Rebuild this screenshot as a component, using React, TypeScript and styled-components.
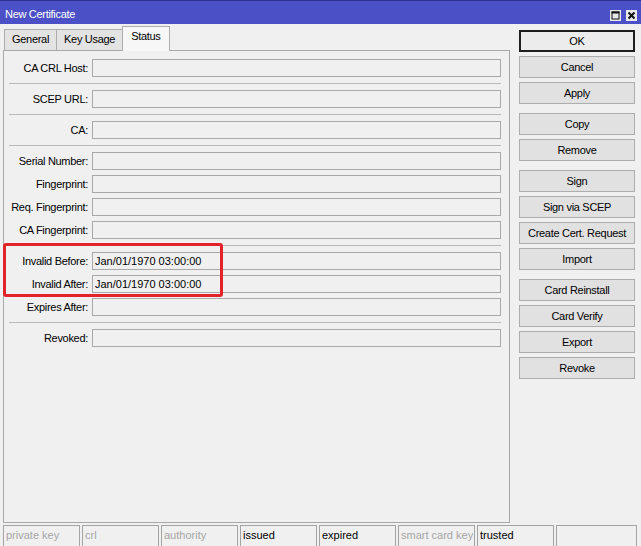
import React from "react";
import styled, { createGlobalStyle } from "styled-components";

const GlobalStyle = createGlobalStyle`
  html, body {
    margin: 0;
    padding: 0;
    background: #f0f0f0;
  }
  body {
    font-family: "Liberation Sans", Arial, sans-serif;
    font-size: 11px;
    color: #000;
  }
`;

const Window = styled.div`
  position: relative;
  width: 641px;
  height: 546px;
  display: flex;
  flex-direction: column;
  background: #f0f0f0;
  overflow: hidden;
`;

const TitleBar = styled.div`
  flex: none;
  height: 24px;
  box-sizing: border-box;
  background: #4b50c6;
  border-top: 1px solid #2d3090;
  display: flex;
  align-items: center;
  padding: 2px 4px 0 5px;
  color: #fff;
  font-size: 11px;
  letter-spacing: -0.3px;
`;

const Title = styled.div`
  flex: 1;
`;

const TitleButtons = styled.div`
  display: flex;
  gap: 5px;
  margin-top: 3px;
  svg {
    display: block;
  }
`;

const Main = styled.div`
  flex: none;
  height: 499px;
  display: flex;
  gap: 9px;
  padding-left: 3px;
`;

const LeftCol = styled.div`
  width: 507px;
  display: flex;
  flex-direction: column;
`;

const Tabs = styled.div`
  flex: none;
  height: 26px;
  display: flex;
  align-items: flex-end;
  padding-left: 2px;
`;

const Tab = styled.div<{ $active?: boolean }>`
  position: relative;
  box-sizing: border-box;
  height: ${(p) => (p.$active ? "25px" : "21px")};
  margin-bottom: ${(p) => (p.$active ? "-1px" : "0")};
  padding: ${(p) => (p.$active ? "3px 8px 0" : "3px 7px 0")};
  border: 1px solid #adadad;
  border-bottom: ${(p) => (p.$active ? "none" : "0")};
  margin-left: -1px;
  background: ${(p) => (p.$active ? "#f7f7f7" : "#e3e3e3")};
  letter-spacing: -0.3px;
  z-index: ${(p) => (p.$active ? 1 : 0)};
`;

const Panel = styled.div`
  flex: 1;
  box-sizing: border-box;
  border: 1px solid #a8a8a8;
  background: #f0f0f0;
  padding: 8px 8px 0 0;
  display: flex;
  flex-direction: column;
  gap: 5px;
`;

const Row = styled.div`
  display: flex;
  align-items: center;
  height: 18px;
  gap: 4px;
`;

const Label = styled.div`
  width: 84px;
  text-align: right;
  letter-spacing: -0.3px;
  white-space: nowrap;
`;

const Field = styled.div`
  flex: 1;
  height: 18px;
  box-sizing: border-box;
  border: 1px solid #a9a9a9;
  background: #f0f0f0;
  padding-left: 2px;
  line-height: 16px;
  white-space: nowrap;
`;

const Separator = styled.div`
  height: 1px;
  margin: 1px 0 1px 5px;
  background: #b9b9b9;
`;

const ButtonCol = styled.div`
  width: 116px;
  padding-top: 6px;
  display: flex;
  flex-direction: column;
  gap: 9px;
`;

const ButtonGroup = styled.div`
  display: flex;
  flex-direction: column;
  gap: 4px;
`;

const Button = styled.div<{ $primary?: boolean }>`
  height: 22px;
  box-sizing: border-box;
  border: ${(p) => (p.$primary ? "2px solid #1e1e1e" : "1px solid #adadad")};
  background: ${(p) => (p.$primary ? "#ececec" : "#e1e1e1")};
  display: flex;
  align-items: center;
  justify-content: center;
  letter-spacing: -0.3px;
  white-space: nowrap;
`;

const StatusBar = styled.div`
  flex: none;
  height: 21px;
  margin-top: 2px;
  display: flex;
  gap: 2px;
  padding-left: 3px;
`;

const StatusCell = styled.div<{ $dim?: boolean; $fill?: boolean }>`
  box-sizing: border-box;
  width: ${(p) => (p.$fill ? "auto" : "77px")};
  flex: ${(p) => (p.$fill ? 1 : "none")};
  margin-right: ${(p) => (p.$fill ? "4px" : "0")};
  border: 1px solid #a4a4a4;
  border-bottom: none;
  padding: 1px 0 0 2px;
  line-height: 16px;
  color: ${(p) => (p.$dim ? "#a6a6a6" : "#000")};
  white-space: nowrap;
  overflow: hidden;
`;

const Highlight = styled.div`
  position: absolute;
  left: 3px;
  top: 243px;
  width: 220px;
  height: 54px;
  box-sizing: border-box;
  border: 3px solid #e3232a;
  border-radius: 3px;
  pointer-events: none;
`;

type FieldRow = { label: string; value?: string } | "sep";

const rows: FieldRow[] = [
  { label: "CA CRL Host:" },
  "sep",
  { label: "SCEP URL:" },
  "sep",
  { label: "CA:" },
  "sep",
  { label: "Serial Number:" },
  { label: "Fingerprint:" },
  { label: "Req. Fingerprint:" },
  { label: "CA Fingerprint:" },
  "sep",
  { label: "Invalid Before:", value: "Jan/01/1970 03:00:00" },
  { label: "Invalid After:", value: "Jan/01/1970 03:00:00" },
  { label: "Expires After:" },
  "sep",
  { label: "Revoked:" },
];

const buttonGroups = [
  ["OK", "Cancel", "Apply"],
  ["Copy", "Remove"],
  ["Sign", "Sign via SCEP", "Create Cert. Request", "Import"],
  ["Card Reinstall", "Card Verify", "Export", "Revoke"],
];

const statusItems = [
  { text: "private key", dim: true },
  { text: "crl", dim: true },
  { text: "authority", dim: true },
  { text: "issued", dim: false },
  { text: "expired", dim: false },
  { text: "smart card key", dim: true },
  { text: "trusted", dim: false },
];

function MaximizeIcon() {
  return (
    <svg width="11" height="11" viewBox="0 0 11 11">
      <rect x="0" y="0" width="11" height="11" fill="#e9e9e9" />
      <rect x="2" y="2" width="7" height="7" fill="none" stroke="#111" strokeWidth="1" />
      <rect x="1.5" y="1.5" width="8" height="2" fill="#111" />
    </svg>
  );
}

function CloseIcon() {
  return (
    <svg width="11" height="11" viewBox="0 0 11 11">
      <rect x="0" y="0" width="11" height="11" fill="#e9e9e9" />
      <path d="M2.5 2.5 L8.5 8.5 M8.5 2.5 L2.5 8.5" stroke="#111" strokeWidth="2" />
    </svg>
  );
}

export default function App() {
  return (
    <Window>
      <GlobalStyle />
      <TitleBar>
        <Title>New Certificate</Title>
        <TitleButtons>
          <MaximizeIcon />
          <CloseIcon />
        </TitleButtons>
      </TitleBar>
      <Main>
        <LeftCol>
          <Tabs>
            <Tab>General</Tab>
            <Tab>Key Usage</Tab>
            <Tab $active>Status</Tab>
          </Tabs>
          <Panel>
            {rows.map((r, i) =>
              r === "sep" ? (
                <Separator key={i} />
              ) : (
                <Row key={i}>
                  <Label>{r.label}</Label>
                  <Field>{r.value}</Field>
                </Row>
              )
            )}
          </Panel>
        </LeftCol>
        <ButtonCol>
          {buttonGroups.map((g, gi) => (
            <ButtonGroup key={gi}>
              {g.map((b) => (
                <Button key={b} $primary={b === "OK"}>
                  {b}
                </Button>
              ))}
            </ButtonGroup>
          ))}
        </ButtonCol>
      </Main>
      <StatusBar>
        {statusItems.map((s) => (
          <StatusCell key={s.text} $dim={s.dim}>
            {s.text}
          </StatusCell>
        ))}
        <StatusCell $fill />
      </StatusBar>
      <Highlight />
    </Window>
  );
}
